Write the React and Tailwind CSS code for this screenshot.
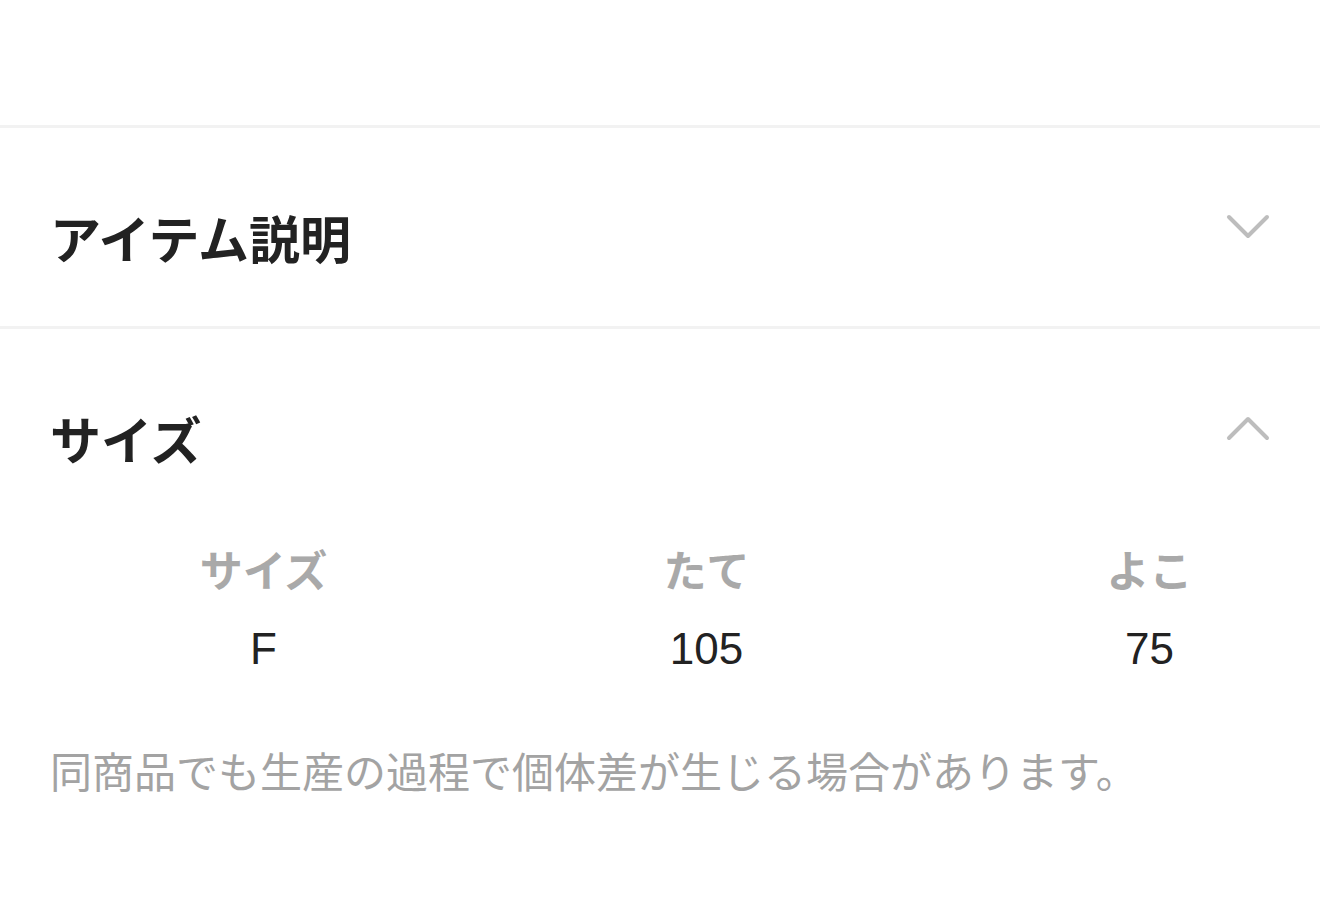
import React from 'react';

const Chevron = ({ up }) => (
    <svg width="44" height="26" viewBox="0 0 44 26" fill="none" className="shrink-0">
        <path
            d={up ? 'M3 23 L22 4 L41 23' : 'M3 3 L22 22 L41 3'}
            stroke="#bdbdbd"
            strokeWidth="4"
            strokeLinecap="round"
            strokeLinejoin="round"
        />
    </svg>
);

const rows = [{ size: 'F', h: '105', w: '75' }];

const jp = { fontFamily: '"Noto Sans CJK JP", sans-serif' };

const App = () => {
    return (
        <div
            className="w-[1320px] h-[897px] bg-white overflow-hidden text-[#222]"
            style={{ fontFamily: '"Liberation Sans", "Noto Sans CJK JP", sans-serif' }}
        >
            <div className="h-[125px]"></div>

            {/* アイテム説明 */}
            <div className="border-t-[3px] border-[#f2f2f2]">
                <div className="h-[198px] flex items-center justify-between pl-[50px] pr-[50px]">
                    <h2 className="text-[51px] font-bold leading-none mt-[20px]" style={jp}>
                        アイテム説明
                    </h2>
                    <Chevron />
                </div>
            </div>

            {/* サイズ */}
            <div className="border-t-[3px] border-[#f2f2f2]">
                <div className="h-[198px] flex items-center justify-between pl-[50px] pr-[50px]">
                    <h2 className="text-[51px] font-bold leading-none mt-[20px]" style={jp}>
                        サイズ
                    </h2>
                    <Chevron up />
                </div>

                <div className="pl-[42px] mt-[11px]">
                    <div className="grid grid-cols-3 w-[1329px] text-center">
                        <div className="text-[43px] font-bold text-[#a9a9a9] leading-[60px]" style={jp}>サイズ</div>
                        <div className="text-[43px] font-bold text-[#a9a9a9] leading-[60px]" style={jp}>たて</div>
                        <div className="text-[43px] font-bold text-[#a9a9a9] leading-[60px]" style={jp}>よこ</div>
                        {rows.map((r) => (
                            <React.Fragment key={r.size}>
                                <div className="text-[44px] leading-[60px] mt-[21px]">{r.size}</div>
                                <div className="text-[44px] leading-[60px] mt-[21px]">{r.h}</div>
                                <div className="text-[44px] leading-[60px] mt-[21px]">{r.w}</div>
                            </React.Fragment>
                        ))}
                    </div>
                </div>

                <p className="pl-[50px] mt-[61px] text-[42px] leading-[60px] text-[#a3a3a3]" style={jp}>
                    同商品でも生産の過程で個体差が生じる場合があります。
                </p>
            </div>
        </div>
    );
};

export default App;
